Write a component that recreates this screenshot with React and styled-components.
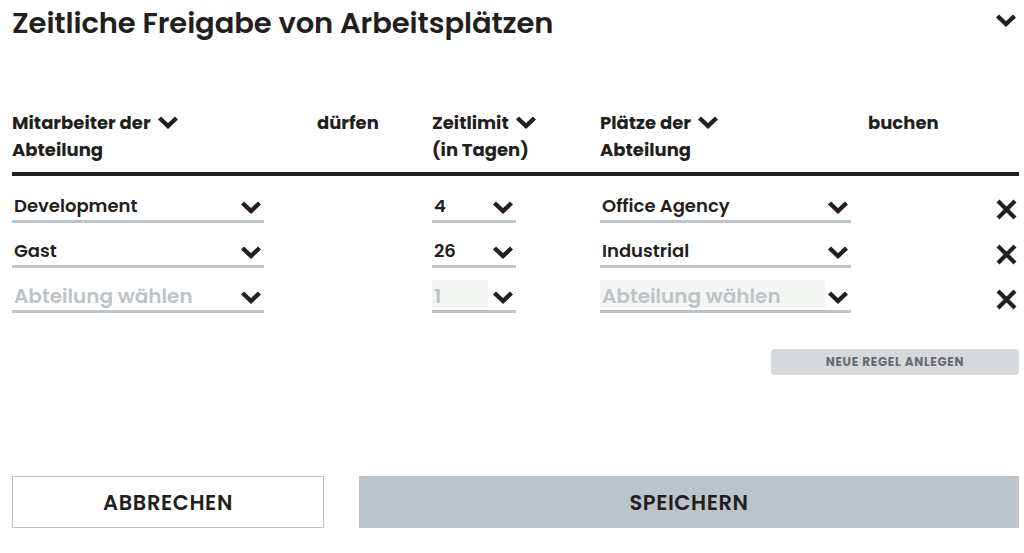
import React from "react";
import styled, { createGlobalStyle } from "styled-components";

const Global = createGlobalStyle`
  html, body { margin: 0; padding: 0; background: #fff; }
  body { font-family: "Poppins", "Inter", "Open Sans", sans-serif; color: #231f20; }
  * { box-sizing: border-box; }
`;

const Page = styled.div`
  width: 1024px;
  height: 553px;
  padding: 0 5px 0 12px;
  display: flex;
  flex-direction: column;
`;

const TitleBar = styled.div`
  display: flex;
  justify-content: space-between;
  align-items: flex-start;
  height: 46px;
  padding-top: 5px;
`;

const Title = styled.h1`
  margin: 0;
  font-size: 29px;
  line-height: 36px;
  font-weight: 600;
  letter-spacing: -0.1px;
`;

const TopToggle = styled.span`
  display: flex;
  margin-top: 8px;
  margin-right: 2px;
`;

const Table = styled.div`
  margin-top: 63px;
  display: grid;
  grid-template-columns: 305px 115px 168px 268px 1fr;
  row-gap: 9px;
`;

const HeadCell = styled.div`
  font-size: 18px;
  font-weight: 700;
  line-height: 27px;
  padding-bottom: 9px;
  border-bottom: 4px solid #231f20;
  margin-bottom: 2px;
  white-space: nowrap;
`;

const HeadLabel = styled.span`
  display: inline-flex;
  align-items: center;
  gap: 6px;
`;

const Cell = styled.div`
  display: flex;
  justify-content: ${(p) => (p.$end ? "flex-end" : "flex-start")};
  height: 36px;
`;

const Select = styled.div`
  width: ${(p) => p.$w}px;
  height: 36px;
  display: flex;
  align-items: flex-start;
  justify-content: space-between;
  border-bottom: 3px solid #bdc4c9;
`;

const Value = styled.span`
  margin-top: 3px;
  height: 27px;
  padding: 5px 4px 0 2px;
  line-height: 22px;
  font-size: ${(p) => (p.$placeholder ? "20px" : "18px")};
  font-weight: 600;
  white-space: nowrap;
  color: ${(p) => (p.$placeholder ? "#bdc4c9" : "#231f20")};
  background: ${(p) => (p.$disabled ? "#f3f6f3" : "transparent")};
  width: ${(p) => (p.$fill ? p.$fill + "px" : "auto")};
`;

const ChevWrap = styled.span`
  display: flex;
  margin-right: 2px;
  margin-top: 14px;
`;

const Chevron = ({ w = 22, h = 13 }) => (
  <svg width={w} height={h} viewBox="0 0 22 13" fill="none">
    <polyline points="2.5,2 11,10 19.5,2" stroke="#231f20" strokeWidth="4.4" strokeLinejoin="miter" />
  </svg>
);

const Cross = () => (
  <svg width="23" height="23" viewBox="0 0 23 23">
    <path d="M3 3 L20 20 M20 3 L3 20" stroke="#231f20" strokeWidth="4.2" />
  </svg>
);

const RemoveBtn = styled.span`
  display: flex;
  margin-top: 11px;
  margin-right: 1px;
`;

const Actions = styled.div`
  display: flex;
  justify-content: flex-end;
  margin-top: 36px;
`;

const NewRule = styled.button`
  width: 248px;
  height: 26px;
  border: none;
  border-radius: 4px;
  background: #d5d9dc;
  color: #6b6b6b;
  font-family: inherit;
  font-size: 12px;
  letter-spacing: 0.7px;
  font-weight: 700;
  padding: 0;
`;

const Footer = styled.div`
  margin-top: 101px;
  display: flex;
  gap: 35px;
`;

const FooterBtn = styled.button`
  height: 52px;
  width: ${(p) => p.$w}px;
  background: ${(p) => (p.$primary ? "#bdc4c9" : "#fff")};
  border: ${(p) => (p.$primary ? "none" : "1.5px solid #bdc4c9")};
  font-family: inherit;
  font-size: 21px;
  font-weight: 600;
  color: #231f20;
  letter-spacing: 0.6px;
  padding: 0;
`;

const rows = [
  { dept: "Development", days: "4", place: "Office Agency" },
  { dept: "Gast", days: "26", place: "Industrial" },
  { dept: null, days: null, place: null },
];

export default function App() {
  return (
    <>
      <Global />
      <Page>
        <TitleBar>
          <Title>Zeitliche Freigabe von Arbeitsplätzen</Title>
          <TopToggle>
            <Chevron w={22} h={15} />
          </TopToggle>
        </TitleBar>
        <Table>
          <HeadCell>
            <HeadLabel>Mitarbeiter der <Chevron /></HeadLabel>
            <br />Abteilung
          </HeadCell>
          <HeadCell>dürfen</HeadCell>
          <HeadCell>
            <HeadLabel>Zeitlimit <Chevron /></HeadLabel>
            <br />(in Tagen)
          </HeadCell>
          <HeadCell>
            <HeadLabel>Plätze der <Chevron /></HeadLabel>
            <br />Abteilung
          </HeadCell>
          <HeadCell>buchen</HeadCell>
          {rows.map((r, i) => (
            <React.Fragment key={i}>
              <Cell>
                <Select $w={252}>
                  <Value $placeholder={!r.dept}>{r.dept || "Abteilung wählen"}</Value>
                  <ChevWrap><Chevron /></ChevWrap>
                </Select>
              </Cell>
              <Cell />
              <Cell>
                <Select $w={84}>
                  <Value $placeholder={!r.days} $disabled={!r.days} $fill={56}>{r.days || "1"}</Value>
                  <ChevWrap><Chevron /></ChevWrap>
                </Select>
              </Cell>
              <Cell>
                <Select $w={251}>
                  <Value $placeholder={!r.place} $disabled={!r.place} $fill={r.place ? 0 : 225}>{r.place || "Abteilung wählen"}</Value>
                  <ChevWrap><Chevron /></ChevWrap>
                </Select>
              </Cell>
              <Cell $end>
                <RemoveBtn><Cross /></RemoveBtn>
              </Cell>
            </React.Fragment>
          ))}
        </Table>
        <Actions>
          <NewRule>NEUE REGEL ANLEGEN</NewRule>
        </Actions>
        <Footer>
          <FooterBtn $w={312}>ABBRECHEN</FooterBtn>
          <FooterBtn $w={660} $primary>SPEICHERN</FooterBtn>
        </Footer>
      </Page>
    </>
  );
}
